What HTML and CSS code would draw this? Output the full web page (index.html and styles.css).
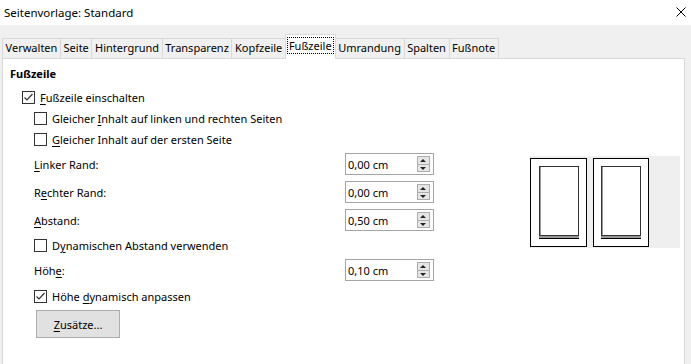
FILE: index.html
```html
<!DOCTYPE html>
<html lang="de">

<head>
    <meta charset="UTF-8">
    <title>Seitenvorlage: Standard</title>
    <link rel="stylesheet" href="styles.css">
</head>

<body>
    <div class="titlebar">
        <span class="title">Seitenvorlage: Standard</span>
        <svg class="close" width="10" height="10" viewBox="0 0 10 10">
            <path d="M0.5 0.5 L9.5 9.5 M9.5 0.5 L0.5 9.5" stroke="#000" stroke-width="1" fill="none"/>
        </svg>
    </div>

    <div class="dialog">
        <div class="tabs">
            <div class="tab">Verwalten</div>
            <div class="tab">Seite</div>
            <div class="tab">Hintergrund</div>
            <div class="tab">Transparenz</div>
            <div class="tab">Kopfzeile</div>
            <div class="tab active"><span class="focus">Fußzeile</span></div>
            <div class="tab">Umrandung</div>
            <div class="tab">Spalten</div>
            <div class="tab">Fußnote</div>
        </div>

        <div class="panel">
            <div class="form">
                <div class="heading">Fußzeile</div>

                <label class="check level1">
                    <span class="box checked">
                        <svg width="11" height="11" viewBox="0 0 11 11"><polyline points="1.5,5.5 4,8 9.5,2" fill="none" stroke="#333" stroke-width="1.2"/></svg>
                    </span>
                    <span><u>F</u>ußzeile einschalten</span>
                </label>
                <label class="check">
                    <span class="box"></span>
                    <span>Gleicher <u>I</u>nhalt auf linken und rechten Seiten</span>
                </label>
                <label class="check">
                    <span class="box"></span>
                    <span><u>G</u>leicher Inhalt auf der ersten Seite</span>
                </label>

                <div class="field first">
                    <span class="label"><u>L</u>inker Rand:</span>
                    <div class="spin"><span>0,00 cm</span><span class="arrows"><i class="up"></i><i class="down"></i></span></div>
                </div>
                <div class="field">
                    <span class="label">R<u>e</u>chter Rand:</span>
                    <div class="spin"><span>0,00 cm</span><span class="arrows"><i class="up"></i><i class="down"></i></span></div>
                </div>
                <div class="field">
                    <span class="label"><u>A</u>bstand:</span>
                    <div class="spin"><span>0,50 cm</span><span class="arrows"><i class="up"></i><i class="down"></i></span></div>
                </div>

                <label class="check dyn">
                    <span class="box"></span>
                    <span>D<u>y</u>namischen Abstand verwenden</span>
                </label>

                <div class="field hoehe">
                    <span class="label">Höh<u>e</u>:</span>
                    <div class="spin"><span>0,10 cm</span><span class="arrows"><i class="up"></i><i class="down"></i></span></div>
                </div>

                <label class="check auto">
                    <span class="box checked">
                        <svg width="11" height="11" viewBox="0 0 11 11"><polyline points="1.5,5.5 4,8 9.5,2" fill="none" stroke="#333" stroke-width="1.2"/></svg>
                    </span>
                    <span>Höhe <u>d</u>ynamisch anpassen</span>
                </label>

                <button class="btn"><u>Z</u>usätze...</button>
            </div>

            <div class="preview">
                <svg width="150" height="92" viewBox="0 0 150 92">
                    <rect x="0" y="0" width="150" height="92" fill="#efefef"/>
                    <!-- linke Seite -->
                    <rect x="0.5" y="2.5" width="56" height="88" fill="#fff" stroke="#000"/>
                    <rect x="9.5" y="10.5" width="39" height="69" fill="#fff" stroke="#333"/>
                    <line x1="10.5" y1="11" x2="10.5" y2="79" stroke="#999"/>
                    <rect x="9" y="80" width="40" height="2" fill="#999"/>
                    <line x1="9" y1="82.5" x2="49" y2="82.5" stroke="#000"/>
                    <!-- rechte Seite -->
                    <rect x="63.5" y="2.5" width="55" height="88" fill="#fff" stroke="#000"/>
                    <rect x="71.5" y="10.5" width="39" height="69" fill="#fff" stroke="#333"/>
                    <line x1="72.5" y1="11" x2="72.5" y2="79" stroke="#999"/>
                    <rect x="71" y="80" width="40" height="2" fill="#999"/>
                    <line x1="71" y1="82.5" x2="111" y2="82.5" stroke="#000"/>
                </svg>
            </div>
        </div>
    </div>
</body>

</html>
```

FILE: styles.css
```css
body {
    margin: 0;
    width: 691px;
    height: 364px;
    overflow: hidden;
    background: #fff;
    font-family: "Noto Sans", "Open Sans", sans-serif;
    font-size: 11px;
    color: #000;
}

u {
    text-decoration: underline;
    text-underline-offset: 2px;
}

.titlebar {
    height: 25px;
    display: flex;
    align-items: center;
    justify-content: space-between;
    padding: 0 5px 0 4px;
    background: #fff;
    font-size: 11.5px;
}

.title {
    margin-top: -1px;
}

.close {
    margin-top: -2px;
}

.dialog {
    background: #f0f0f0;
    height: 339px;
    padding: 9px 0 0 2px;
    box-sizing: border-box;
}

.tabs {
    display: flex;
    align-items: flex-end;
    height: 24px;
}

.tab {
    height: 19px;
    line-height: 18px;
    padding: 0 2.6px;
    border: 1px solid #d9d9d9;
    border-bottom: none;
    margin-left: -1px;
    background: #f0f0f0;
    white-space: nowrap;
}

.tab:first-child {
    margin-left: 0;
}

.tab.active {
    height: 24px;
    line-height: 22px;
    background: #fff;
    position: relative;
    z-index: 1;
    margin-bottom: -1px;
    padding: 0 1px;
}

.focus {
    border: 1px dotted #000;
    padding: 0 1px;
}

.panel {
    display: flex;
    width: 683px;
    height: 320px;
    background: #fff;
    border: 1px solid #d9d9d9;
    box-sizing: border-box;
    padding: 6px 0 0 7px;
}

.form {
    display: flex;
    flex-direction: column;
    width: 427px;
}

.heading {
    font-weight: bold;
    height: 18px;
    line-height: 18px;
}

.check {
    display: flex;
    align-items: center;
    height: 21px;
    padding-left: 24px;
}

.check.level1 {
    padding-left: 12px;
    margin-top: 4px;
}

.check.dyn {
    margin-top: 4px;
}

.check.auto {
    margin-top: 5px;
}

.box {
    width: 13px;
    height: 13px;
    border: 1px solid #333;
    box-sizing: border-box;
    margin-right: 5px;
    display: flex;
    align-items: center;
    justify-content: center;
    background: #fff;
}

.field {
    display: flex;
    align-items: center;
    padding-left: 24px;
    margin-top: 6px;
}

.field.first,
.field.hoehe {
    margin-top: 3px;
}

.label {
    width: 311px;
}

.spin {
    width: 89px;
    height: 22px;
    border: 1px solid #a5a5a5;
    box-sizing: border-box;
    display: flex;
    align-items: center;
    justify-content: space-between;
    padding: 0 2px 0 2px;
}

.arrows {
    display: flex;
    flex-direction: column;
    width: 13px;
    height: 16px;
    border: 1px solid #adadad;
    box-sizing: border-box;
    background: #e6e6e6;
    margin-right: 1px;
}

.arrows i {
    flex: 1;
    position: relative;
}

.arrows .up {
    border-bottom: 1px solid #adadad;
}

.arrows i::after {
    content: "";
    position: absolute;
    left: 2px;
    border-left: 3.5px solid transparent;
    border-right: 3.5px solid transparent;
}

.arrows .up::after {
    top: 2px;
    border-bottom: 3px solid #222;
}

.arrows .down::after {
    top: 2px;
    border-top: 3px solid #222;
}

.btn {
    margin: 3px 0 0 26px;
    width: 84px;
    height: 28px;
    background: #e1e1e1;
    border: 1px solid #adadad;
    font-family: inherit;
    font-size: 11px;
    color: #000;
    padding: 0;
}

.preview {
    margin: 91px 0 0 93px;
    width: 150px;
    height: 92px;
}

.preview svg {
    display: block;
}
```
